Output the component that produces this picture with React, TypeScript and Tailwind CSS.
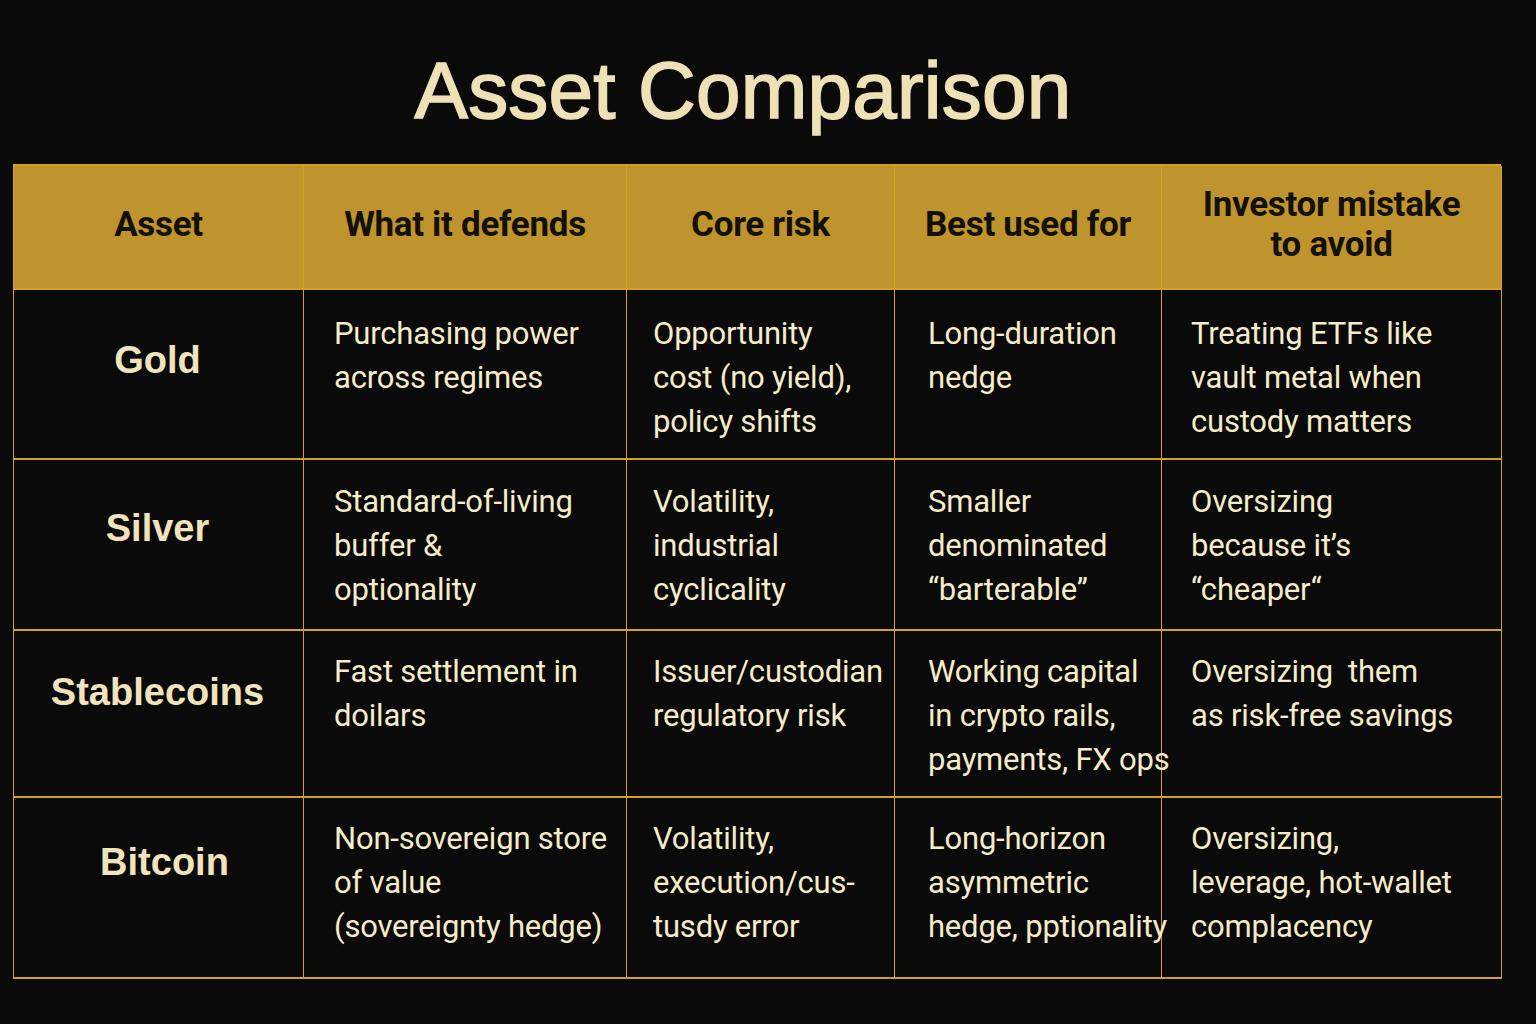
import React from 'react';

type Row = {
  asset: string;
  assetPad: string;
  cellPad: string;
  cells: string[][];
};

const HEADERS: string[][] = [
  ['Asset'],
  ['What it defends'],
  ['Core risk'],
  ['Best used for'],
  ['Investor mistake', 'to avoid'],
];

const ROWS: Row[] = [
  {
    asset: 'Gold',
    assetPad: 'pt-[50px]',
    cellPad: 'pt-[22px]',
    cells: [
      ['Purchasing power', 'across regimes'],
      ['Opportunity', 'cost (no yield),', 'policy shifts'],
      ['Long-duration', 'nedge'],
      ['Treating ETFs like', 'vault metal when', 'custody matters'],
    ],
  },
  {
    asset: 'Silver',
    assetPad: 'pt-[48px]',
    cellPad: 'pt-[20px]',
    cells: [
      ['Standard-of-living', 'buffer &', 'optionality'],
      ['Volatility,', 'industrial', 'cyclicality'],
      ['Smaller', 'denominated', '\u201Cbarterable\u201D'],
      ['Oversizing', 'because it\u2019s', '\u201Ccheaper\u201C'],
    ],
  },
  {
    asset: 'Stablecoins',
    assetPad: 'pt-[41px]',
    cellPad: 'pt-[19px]',
    cells: [
      ['Fast settlement in', 'doilars'],
      ['Issuer/custodian', 'regulatory risk'],
      ['Working capital', 'in crypto rails,', 'payments, FX ops'],
      ['Oversizing  them', 'as risk-free savings'],
    ],
  },
  {
    asset: 'Bitcoin',
    assetPad: 'pt-[44px] pl-[14px]',
    cellPad: 'pt-[19px]',
    cells: [
      ['Non-sovereign store', 'of value', '(sovereignty hedge)'],
      ['Volatility,', 'execution/cus-', 'tusdy error'],
      ['Long-horizon', 'asymmetric', 'hedge, pptionality'],
      ['Oversizing,', 'leverage, hot-wallet', 'complacency'],
    ],
  },
];

const CELL_PAD = ['pl-[30px]', 'pl-[26px]', 'pl-[33px]', 'pl-[29px]'];

export default function App() {
  return (
    <div className="min-h-[1024px] w-[1536px] bg-[#0a0a0a] font-['Roboto',sans-serif]">
      <div className="flex h-[164px] items-start justify-center pr-[50px] pt-[51px]">
        <h1 className="font-['Liberation_Sans',Arial,sans-serif] text-[80px] leading-[80px] tracking-[0.2px] text-[#efe1b6] [-webkit-text-stroke:1.6px_#efe1b6]">
          Asset Comparison
        </h1>
      </div>

      <div className="ml-[13px] grid w-[1488px] grid-cols-[290px_323px_268px_267px_340px] grid-rows-[124px_170px_171px_167px_181px] border-l border-t-2 border-[#d4a021]">
        {HEADERS.map((lines, i) => (
          <div
            key={i}
            className="flex flex-col items-center justify-center border-r border-b-2 border-[#d4a021] bg-[#bf942c] pb-[4px] text-center text-[35px] font-bold leading-[40px] tracking-[-0.3px] text-[#121008]"
          >
            {lines.map((l) => (
              <span key={l}>{l}</span>
            ))}
          </div>
        ))}

        {ROWS.map((row) => (
          <React.Fragment key={row.asset}>
            <div className={`flex justify-center border-r border-b-2 border-[#d4a021] pr-[2px] ${row.assetPad}`}>
              <span className="font-['Liberation_Sans',Arial,sans-serif] text-[38px] font-bold leading-[40px] text-[#f1e4bd]">
                {row.asset}
              </span>
            </div>
            {row.cells.map((lines, ci) => (
              <div
                key={ci}
                className={`flex flex-col border-r border-b-2 border-[#d4a021] ${row.cellPad} ${CELL_PAD[ci]} text-[31px] leading-[44px] tracking-[-0.2px] text-[#f6ecc9]`}
              >
                {lines.map((l) => (
                  <span key={l} className="whitespace-pre">
                    {l}
                  </span>
                ))}
              </div>
            ))}
          </React.Fragment>
        ))}
      </div>
    </div>
  );
}
